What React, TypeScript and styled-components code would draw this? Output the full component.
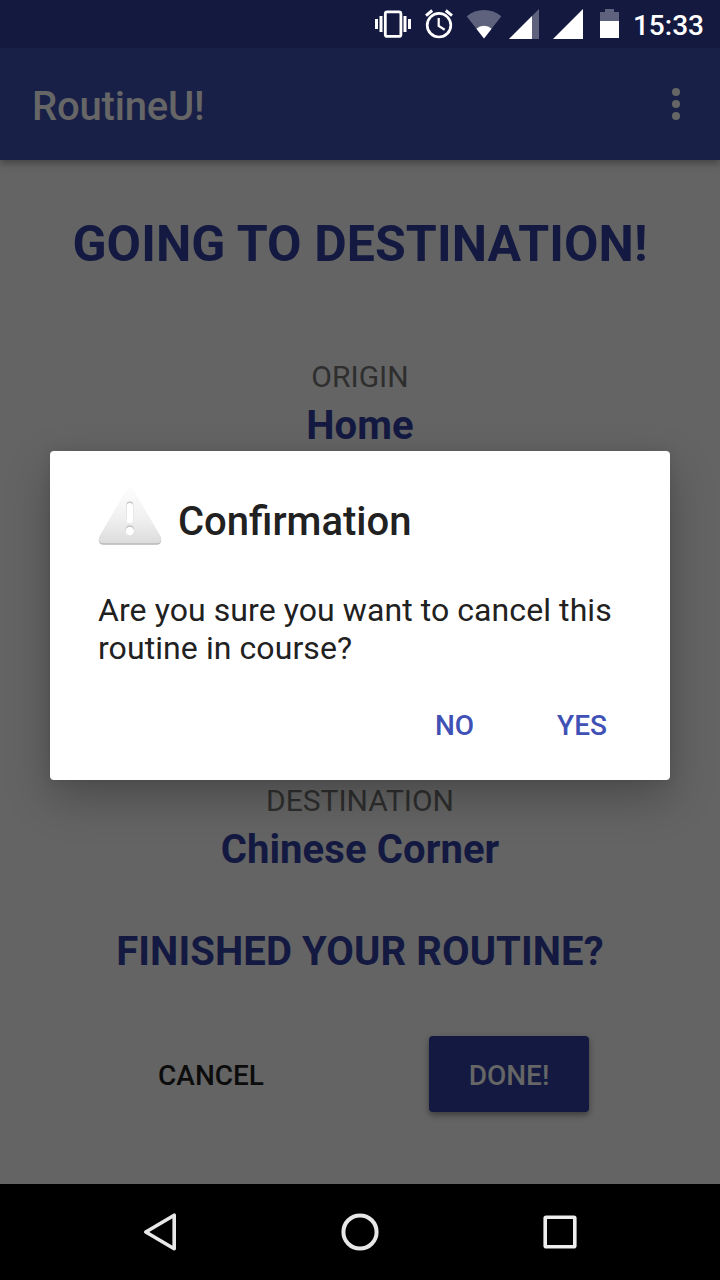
import React from "react";
import styled, { createGlobalStyle } from "styled-components";

const GlobalStyle = createGlobalStyle`
  body { margin: 0; background: #646464; font-family: Roboto, "Liberation Sans", sans-serif; }
  * { box-sizing: border-box; }
`;

const Screen = styled.div`
  position: relative;
  width: 720px;
  height: 1280px;
  display: flex;
  flex-direction: column;
  background: #646464;
  overflow: hidden;
`;

const StatusBar = styled.header`
  height: 48px;
  flex: none;
  display: flex;
  justify-content: flex-end;
  background: #141940;
  z-index: 1;
`;

const Clock = styled.time`
  width: 94px;
  padding: 2px 16px 0 0;
  text-align: right;
  color: #fff;
  font-size: 28px;
  font-weight: 500;
  line-height: 48px;
`;

const AppBar = styled.div`
  height: 112px;
  flex: none;
  display: flex;
  align-items: center;
  justify-content: space-between;
  padding: 0 32px;
  background: #192048;
  box-shadow: 0 3px 8px rgba(0, 0, 0, 0.35);
`;

const AppTitle = styled.h1`
  margin: 0;
  padding-top: 6px;
  color: #666;
  font-size: 40px;
  font-weight: 500;
  line-height: 48px;
  letter-spacing: -0.2px;
`;

const MenuButton = styled.button`
  width: 24px;
  height: 48px;
  padding: 0;
  border: 0;
  background: none;
`;

const Content = styled.main`
  flex: 1;
  padding-top: 54px;
  display: flex;
  flex-direction: column;
  align-items: center;
`;

const Heading = styled.h2<{ $size: number; $top?: number }>`
  margin: ${(p) => p.$top ?? 0}px 0 0;
  color: #131940;
  font-size: ${(p) => p.$size}px;
  font-weight: 700;
  line-height: ${(p) => p.$size * 1.2}px;
  letter-spacing: 0.1px;
  white-space: nowrap;
`;

const Label = styled.div<{ $top: number }>`
  margin-top: ${(p) => p.$top}px;
  color: #2e2e2e;
  font-size: 30px;
  line-height: 36px;
`;

const Actions = styled.div`
  display: flex;
  gap: 138px;
  margin-top: 60px;
`;

const ActionButton = styled.button<{ $raised?: boolean }>`
  width: 160px;
  height: 76px;
  padding: 3px 0 0;
  border: 0;
  border-radius: 4px;
  background: ${(p) => (p.$raised ? "#131940" : "transparent")};
  color: ${(p) => (p.$raised ? "#666" : "#0c0c0c")};
  box-shadow: ${(p) => (p.$raised ? "0 3px 6px rgba(0, 0, 0, 0.4)" : "none")};
  font: 500 28px Roboto, sans-serif;
`;

const NavBar = styled.nav`
  height: 96px;
  flex: none;
  display: flex;
  align-items: center;
  justify-content: center;
  gap: 152px;
  background: #000;
`;

const Dialog = styled.section`
  position: absolute;
  left: 50px;
  top: 451px;
  width: 620px;
  height: 329px;
  padding: 36px 48px 0;
  border-radius: 4px;
  background: #fff;
  box-shadow: 0 18px 44px rgba(0, 0, 0, 0.25), 0 0 12px rgba(0, 0, 0, 0.08);
  color: #212121;
`;

const DialogHeader = styled.div`
  display: flex;
  gap: 16px;
  height: 64px;
`;

const DialogTitle = styled.h3`
  margin: 0;
  padding-top: 5px;
  font-size: 40px;
  font-weight: 500;
  line-height: 60px;
`;

const Message = styled.p`
  margin: 40px 0 0;
  font-size: 32px;
  line-height: 38px;
  letter-spacing: 0.08px;
  white-space: nowrap;
`;

const DialogActions = styled.div`
  display: flex;
  justify-content: flex-end;
  margin: 22px -24px 0 0;
`;

const DialogButton = styled.button<{ $width: number }>`
  width: ${(p) => p.$width}px;
  height: 72px;
  padding: 0;
  border: 0;
  background: none;
  color: #3f51b5;
  font: 500 28px Roboto, sans-serif;
`;

const StatusIcons = () => (
  <svg width="260" height="48" viewBox="366 0 260 48" fill="#fff">
    <rect x="385.3" y="11.8" width="15.6" height="24.6" rx="2" fill="none" stroke="#fff" strokeWidth="2.8" />
    <path d="M375 19h3v10h-3zM379.5 16h3v16h-3zM403.5 16h3v16h-3zM408 19h3v10h-3z" />
    <g fill="none" stroke="#fff" strokeWidth="2.7">
      <circle cx="439" cy="25.2" r="11.8" />
      <path d="M438.7 18v8l6 3.8" strokeWidth="2.2" />
      <path d="M426 15.6l6.2-5.1M452 15.6l-6.2-5.1" strokeWidth="3" />
    </g>
    <path d="M484 38.5L466.7 16.3Q474.5 10 484 10T501.3 16.3Z" fillOpacity=".32" />
    <path d="M484 38.5L476.4 28.7Q479.5 25.8 484 25.8T491.6 28.7Z" />
    <path d="M539 9v30h-30z" fillOpacity=".32" />
    <path d="M532 16v23h-23z" />
    <path d="M583 9v30h-30z" />
    <path d="M600 21v-9h5V9h9v3h5v9z" fillOpacity=".32" />
    <path d="M600 21h19v17h-19z" />
  </svg>
);

const WarningIcon = () => (
  <svg width="64" height="64" viewBox="0 0 64 64">
    <defs>
      <linearGradient id="face" x1="0" y1="0" x2="0" y2="1">
        <stop offset="0" stopColor="#fdfdfd" />
        <stop offset=".55" stopColor="#f0f0f0" />
        <stop offset="1" stopColor="#dcdcdc" />
      </linearGradient>
      <linearGradient id="edge" x1="0" y1="0" x2="0" y2="1">
        <stop offset="0" stopColor="#fafafa" />
        <stop offset=".8" stopColor="#dedede" />
        <stop offset="1" stopColor="#b4b4b4" />
      </linearGradient>
    </defs>
    <path d="M29 3.3Q32 -.8 35 3.3L62.8 50.5Q64.5 57.8 58.5 57.8H5.5Q-.5 57.8 1.2 50.5Z" fill="url(#edge)" />
    <path d="M28.5 2.8Q32 -.8 35.5 2.8L62.8 49.8Q64.5 56.2 58.5 56.2H5.5Q-.5 56.2 1.2 49.8Z" fill="url(#face)" />
    <rect x="28.4" y="14.6" width="6.8" height="20.5" rx="3.4" fill="#c4c4c4" />
    <rect x="28.6" y="16" width="6.4" height="20" rx="3.2" fill="#fff" />
    <circle cx="31.8" cy="42.8" r="4.4" fill="#bcbcbc" />
    <circle cx="31.8" cy="44" r="4.2" fill="#fff" />
  </svg>
);

export default function App() {
  return (
    <>
      <GlobalStyle />
      <Screen>
        <StatusBar>
          <StatusIcons />
          <Clock>15:33</Clock>
        </StatusBar>
        <AppBar>
          <AppTitle>RoutineU!</AppTitle>
          <MenuButton aria-label="More options">
            <svg width="24" height="48" viewBox="0 0 24 48" fill="#666">
              <circle cx="12" cy="12" r="4" />
              <circle cx="12" cy="24" r="4" />
              <circle cx="12" cy="36" r="4" />
            </svg>
          </MenuButton>
        </AppBar>
        <Content>
          <Heading $size={50}>GOING TO DESTINATION!</Heading>
          <Label $top={85}>ORIGIN</Label>
          <Heading $size={40} $top={7}>Home</Heading>
          <Label $top={333}>DESTINATION</Label>
          <Heading $size={40} $top={7}>Chinese Corner</Heading>
          <Heading $size={40} $top={54}>FINISHED YOUR ROUTINE?</Heading>
          <Actions>
            <ActionButton>CANCEL</ActionButton>
            <ActionButton $raised>DONE!</ActionButton>
          </Actions>
        </Content>
        <NavBar>
          <svg width="48" height="48" fill="none" stroke="#e8e8e8" strokeWidth="3.6">
            <path d="M9.8 24L38.2 7.2V40.8Z" strokeLinejoin="round" />
          </svg>
          <svg width="48" height="48" fill="none" stroke="#e8e8e8" strokeWidth="4">
            <circle cx="24" cy="24" r="16.6" />
          </svg>
          <svg width="48" height="48" fill="none" stroke="#eee" strokeWidth="3.6">
            <rect x="9.2" y="9.2" width="29.6" height="29.6" rx="1" />
          </svg>
        </NavBar>
        <Dialog role="dialog">
          <DialogHeader>
            <WarningIcon />
            <DialogTitle>Confirmation</DialogTitle>
          </DialogHeader>
          <Message>
            Are you sure you want to cancel this
            <br />
            routine in course?
          </Message>
          <DialogActions>
            <DialogButton $width={127}>NO</DialogButton>
            <DialogButton $width={128}>YES</DialogButton>
          </DialogActions>
        </Dialog>
      </Screen>
    </>
  );
}
